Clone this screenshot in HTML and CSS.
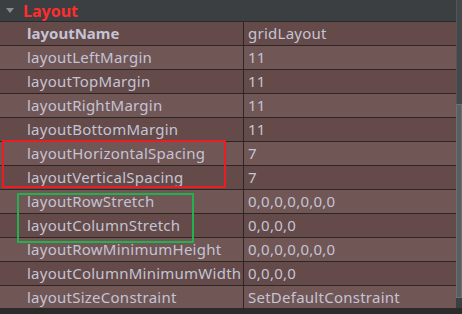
FILE: index.html
```html
<!DOCTYPE html>
<html>
<head>
<meta charset="utf-8">
<link rel="stylesheet" href="styles.css">
</head>
<body>
<div class="panel">
  <div class="main">
    <div class="table">
      <div class="header">
        <svg class="caret" width="8" height="6" viewBox="0 0 8 6"><path d="M0 0H8L4 5Z" fill="#8a8d90"/></svg>
        <span class="group">Layout</span>
      </div>
      <div class="row odd"><div class="key bold">layoutName</div><div class="val">gridLayout</div></div>
      <div class="row even"><div class="key">layoutLeftMargin</div><div class="val">11</div></div>
      <div class="row odd"><div class="key">layoutTopMargin</div><div class="val">11</div></div>
      <div class="row even"><div class="key">layoutRightMargin</div><div class="val">11</div></div>
      <div class="row odd"><div class="key">layoutBottomMargin</div><div class="val">11</div></div>
      <div class="row even"><div class="key">layoutHorizontalSpacing</div><div class="val">7</div></div>
      <div class="row odd"><div class="key">layoutVerticalSpacing</div><div class="val">7</div></div>
      <div class="row even"><div class="key">layoutRowStretch</div><div class="val">0,0,0,0,0,0,0</div></div>
      <div class="row odd"><div class="key">layoutColumnStretch</div><div class="val">0,0,0,0</div></div>
      <div class="row even"><div class="key">layoutRowMinimumHeight</div><div class="val">0,0,0,0,0,0,0</div></div>
      <div class="row odd"><div class="key">layoutColumnMinimumWidth</div><div class="val">0,0,0,0</div></div>
      <div class="row even"><div class="key">layoutSizeConstraint</div><div class="val">SetDefaultConstraint</div></div>
    </div>
    <div class="scrollbar">
      <div class="track"></div>
      <div class="thumb"></div>
      <div class="arrow"></div>
    </div>
    <div class="mark red"></div>
    <div class="mark green"></div>
  </div>
</div>
</body>
</html>
```
FILE: styles.css
```css
html, body {
  margin: 0;
  padding: 0;
  background: #2b2b2b;
}
.panel {
  width: 462px;
  height: 314px;
  overflow: hidden;
  background: #2b2b2b;
  font-family: "Noto Sans", "Open Sans", sans-serif;
  font-size: 15px;
  letter-spacing: 0.25px;
  color: #c4c4d4;
}
.main {
  position: relative;
  display: flex;
  height: 308px;
}
.table {
  width: 456px;
  display: flex;
  flex-direction: column;
  overflow: hidden;
}
.header {
  height: 21px;
  flex: none;
  background: #3c3f41;
  display: flex;
  align-items: center;
  border-bottom: 1px solid #2b2b2b;
}
.caret {
  margin-left: 6px;
  margin-right: 9px;
}
.group {
  color: #ff2d2d;
  font-weight: bold;
  font-size: 16px;
  letter-spacing: 0;
}
.row {
  flex: none;
  height: 23px;
  display: flex;
  border-bottom: 1px solid #2e2626;
  line-height: 23px;
}
.row.odd { background: #654a4a; }
.row.even { background: #715656; }
.key {
  width: 216px;
  padding-left: 27px;
  border-right: 1px solid #2e2626;
  white-space: nowrap;
  overflow: hidden;
}
.key.bold { font-weight: bold; letter-spacing: 0; }
.val {
  padding-left: 4px;
  white-space: nowrap;
}
.scrollbar {
  width: 6px;
  position: relative;
  background: #3c3f41;
}
.track {
  height: 104px;
  background: #45484a;
  border-left: 1px solid #555;
}
.thumb {
  height: 192px;
  background: #5b5e60;
  border: 1px solid #6d7072;
}
.arrow {
  height: 10px;
}
.mark {
  position: absolute;
  border: 2px solid;
  box-sizing: border-box;
}
.mark.red {
  border-color: #ec1c24;
  left: 2px;
  top: 140px;
  width: 224px;
  height: 48px;
}
.mark.green {
  border-color: #22b14c;
  left: 17px;
  top: 193px;
  width: 177px;
  height: 50px;
}
```
